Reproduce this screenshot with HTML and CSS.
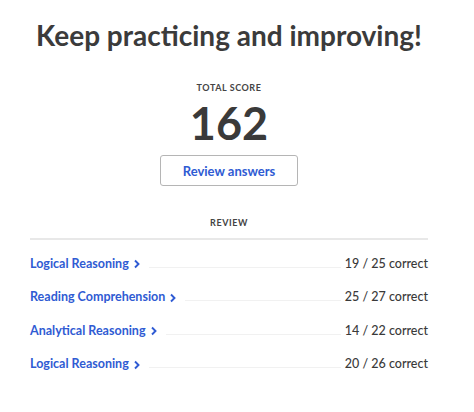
FILE: index.html
```html
<!DOCTYPE html>
<html>
<head>
<meta charset="utf-8">
<link rel="stylesheet" href="styles.css">
</head>
<body>
<main class="page">
  <h1 class="title">Keep practicing and improving!</h1>
  <section class="score">
    <div class="label">TOTAL SCORE</div>
    <div class="value">162</div>
    <button class="btn">Review answers</button>
  </section>
  <section class="review">
    <div class="review-head">REVIEW</div>
    <ul class="rows">
      <li class="row"><a class="link">Logical Reasoning <svg class="chev" viewBox="0 0 8 10" width="8" height="10"><path d="M2 1.5 L5.5 5 L2 8.5" fill="none" stroke="currentColor" stroke-width="1.9"/></svg></a><span class="fill"></span><span class="res">19 / 25 correct</span></li>
      <li class="row"><a class="link">Reading Comprehension <svg class="chev" viewBox="0 0 8 10" width="8" height="10"><path d="M2 1.5 L5.5 5 L2 8.5" fill="none" stroke="currentColor" stroke-width="1.9"/></svg></a><span class="fill"></span><span class="res">25 / 27 correct</span></li>
      <li class="row"><a class="link">Analytical Reasoning <svg class="chev" viewBox="0 0 8 10" width="8" height="10"><path d="M2 1.5 L5.5 5 L2 8.5" fill="none" stroke="currentColor" stroke-width="1.9"/></svg></a><span class="fill"></span><span class="res">14 / 22 correct</span></li>
      <li class="row"><a class="link">Logical Reasoning <svg class="chev" viewBox="0 0 8 10" width="8" height="10"><path d="M2 1.5 L5.5 5 L2 8.5" fill="none" stroke="currentColor" stroke-width="1.9"/></svg></a><span class="fill"></span><span class="res">20 / 26 correct</span></li>
    </ul>
  </section>
</main>
</body>
</html>
```
FILE: styles.css
```css
html, body {
  margin: 0;
  padding: 0;
  background: #fff;
}
body {
  font-family: Lato, "Open Sans", sans-serif;
  color: #3a3a3a;
}
.page {
  width: 398px;
  margin-left: 30px;
  padding-top: 18px;
  display: flex;
  flex-direction: column;
  align-items: center;
}
.title {
  margin: 0;
  font-size: 28px;
  font-weight: 700;
  line-height: 34px;
  color: #3b3b3b;
  white-space: nowrap;
}
.score {
  display: flex;
  flex-direction: column;
  align-items: center;
  margin-top: 30px;
}
.label {
  font-size: 9px;
  font-weight: 700;
  letter-spacing: 0.55px;
  line-height: 11px;
  color: #444;
}
.value {
  font-size: 45px;
  font-weight: 700;
  line-height: 46px;
  color: #3a3a3a;
  margin-top: 7px;
}
.btn {
  margin-top: 9px;
  width: 138px;
  height: 31px;
  border: 1px solid #b5b5b5;
  border-radius: 3px;
  background: #fff;
  font-family: Lato, sans-serif;
  font-size: 13px;
  font-weight: 700;
  color: #2f5bd3;
  padding: 0;
}
.review {
  align-self: stretch;
  margin-top: 31px;
}
.review-head {
  text-align: center;
  font-size: 9px;
  font-weight: 700;
  letter-spacing: 0.55px;
  line-height: 11px;
  color: #444;
  padding-bottom: 10px;
  border-bottom: 2px solid #e8e8e8;
}
.rows {
  list-style: none;
  margin: 0;
  padding: 7px 0 0;
}
.row {
  display: flex;
  align-items: center;
  height: 33.5px;
  font-size: 12.5px;
  line-height: 16px;
}
.link {
  color: #2f5bd3;
  font-weight: 700;
  display: flex;
  align-items: center;
  gap: 4px;
  white-space: nowrap;
}
.chev {
  display: block;
  margin-top: 1px;
}
.fill {
  flex: 1;
  height: 1px;
  background: #f1f1f1;
  margin: 7px 4px 0 8px;
}
.res {
  color: #3a3a3a;
  font-weight: 500;
  white-space: nowrap;
}
```
